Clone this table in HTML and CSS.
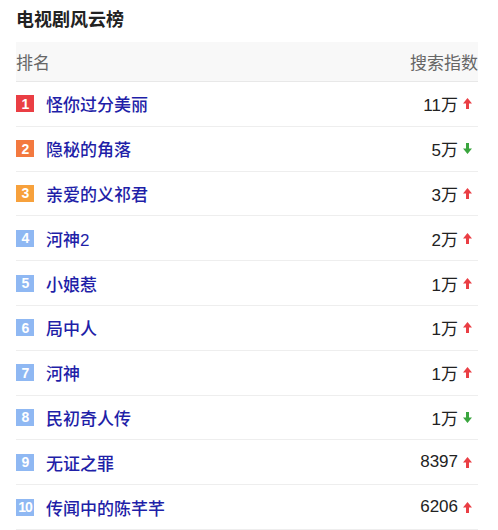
FILE: index.html
```html
<!DOCTYPE html>
<html lang="zh">
<head>
<meta charset="utf-8">
<link rel="stylesheet" href="styles.css">
</head>
<body>
<div class="board">
  <h2 class="title">电视剧风云榜</h2>
  <div class="table">
    <div class="row head"><span>排名</span><span>搜索指数</span></div>
    <div class="row"><span class="name"><i class="badge r1">1</i><a>怪你过分美丽</a></span><span class="val">11万<svg class="up" viewBox="0 0 9 11"><path d="M4.5 0L9 5.5H6V11H3V5.5H0Z"/></svg></span></div>
    <div class="row"><span class="name"><i class="badge r2">2</i><a>隐秘的角落</a></span><span class="val">5万<svg class="down" viewBox="0 0 9 11"><path d="M4.5 11L9 5.5H6V0H3V5.5H0Z"/></svg></span></div>
    <div class="row"><span class="name"><i class="badge r3">3</i><a>亲爱的义祁君</a></span><span class="val">3万<svg class="up" viewBox="0 0 9 11"><path d="M4.5 0L9 5.5H6V11H3V5.5H0Z"/></svg></span></div>
    <div class="row"><span class="name"><i class="badge">4</i><a>河神2</a></span><span class="val">2万<svg class="up" viewBox="0 0 9 11"><path d="M4.5 0L9 5.5H6V11H3V5.5H0Z"/></svg></span></div>
    <div class="row"><span class="name"><i class="badge">5</i><a>小娘惹</a></span><span class="val">1万<svg class="up" viewBox="0 0 9 11"><path d="M4.5 0L9 5.5H6V11H3V5.5H0Z"/></svg></span></div>
    <div class="row"><span class="name"><i class="badge">6</i><a>局中人</a></span><span class="val">1万<svg class="up" viewBox="0 0 9 11"><path d="M4.5 0L9 5.5H6V11H3V5.5H0Z"/></svg></span></div>
    <div class="row"><span class="name"><i class="badge">7</i><a>河神</a></span><span class="val">1万<svg class="up" viewBox="0 0 9 11"><path d="M4.5 0L9 5.5H6V11H3V5.5H0Z"/></svg></span></div>
    <div class="row"><span class="name"><i class="badge">8</i><a>民初奇人传</a></span><span class="val">1万<svg class="down" viewBox="0 0 9 11"><path d="M4.5 11L9 5.5H6V0H3V5.5H0Z"/></svg></span></div>
    <div class="row"><span class="name"><i class="badge">9</i><a>无证之罪</a></span><span class="val">8397<svg class="up" viewBox="0 0 9 11"><path d="M4.5 0L9 5.5H6V11H3V5.5H0Z"/></svg></span></div>
    <div class="row"><span class="name"><i class="badge">10</i><a>传闻中的陈芊芊</a></span><span class="val">6206<svg class="up" viewBox="0 0 9 11"><path d="M4.5 0L9 5.5H6V11H3V5.5H0Z"/></svg></span></div>
  </div>
</div>
</body>
</html>
```

FILE: styles.css
```css
html, body {
  margin: 0;
  padding: 0;
  background: #fff;
}
body {
  font-family: "Liberation Sans", Arial, "Noto Sans CJK SC", sans-serif;
  color: #333;
}
.board {
  padding: 8px 20px 0 16px;
}
.title {
  margin: 0;
  font-size: 18px;
  font-weight: bold;
  line-height: 24px;
  color: #222;
}
.table {
  margin-top: 10px;
}
.row {
  display: flex;
  justify-content: space-between;
  align-items: center;
  height: 43.8px;
  border-bottom: 1px solid #eeeeee;
  font-size: 17px;
}
.row.head {
  height: 39px;
  background: #f8f8f8;
  color: #666;
  font-size: 17px;
  border-bottom: 1px solid #e8e8e8;
}
.name {
  display: flex;
  align-items: center;
}
.badge {
  display: inline-flex;
  align-items: center;
  justify-content: center;
  width: 18px;
  height: 17px;
  margin-right: 12px;
  background: #8fb8f3;
  color: #fff;
  font-style: normal;
  font-size: 14px;
  font-weight: bold;
  letter-spacing: -1px;
}
.badge.r1 { background: #ea3e44; }
.badge.r2 { background: #f3793f; }
.badge.r3 { background: #f7a13c; }
.name a {
  color: #1f1fa8;
  font-size: 17px;
  font-weight: 500;
  text-decoration: none;
}
.val {
  display: flex;
  align-items: center;
  color: #222;
}
.val svg {
  width: 9px;
  height: 11px;
  margin-left: 5px;
  margin-right: 6px;
}
.up { fill: #ea3e44; }
.down { fill: #3aa53e; }
```
